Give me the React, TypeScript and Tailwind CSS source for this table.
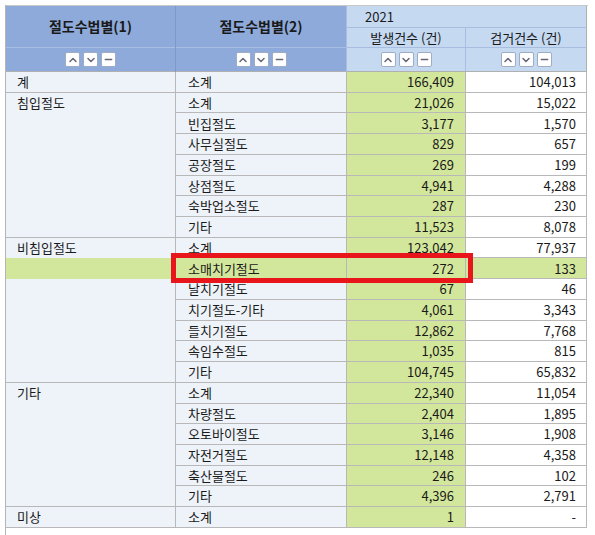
import { ChevronDown, ChevronUp, Minus } from "lucide-react";

type Row = { group: string; first: boolean; last: boolean; name: string; occ: string; arr: string; hl?: boolean };

const groups: { group: string; items: [string, string, string][] }[] = [
    { group: "계", items: [["소계", "166,409", "104,013"]] },
    {
        group: "침입절도",
        items: [
            ["소계", "21,026", "15,022"],
            ["빈집절도", "3,177", "1,570"],
            ["사무실절도", "829", "657"],
            ["공장절도", "269", "199"],
            ["상점절도", "4,941", "4,288"],
            ["숙박업소절도", "287", "230"],
            ["기타", "11,523", "8,078"],
        ],
    },
    {
        group: "비침입절도",
        items: [
            ["소계", "123,042", "77,937"],
            ["소매치기절도", "272", "133"],
            ["날치기절도", "67", "46"],
            ["치기절도-기타", "4,061", "3,343"],
            ["들치기절도", "12,862", "7,768"],
            ["속임수절도", "1,035", "815"],
            ["기타", "104,745", "65,832"],
        ],
    },
    {
        group: "기타",
        items: [
            ["소계", "22,340", "11,054"],
            ["차량절도", "2,404", "1,895"],
            ["오토바이절도", "3,146", "1,908"],
            ["자전거절도", "12,148", "4,358"],
            ["축산물절도", "246", "102"],
            ["기타", "4,396", "2,791"],
        ],
    },
    { group: "미상", items: [["소계", "1", "-"]] },
];

const rows: Row[] = groups.flatMap((g) =>
    g.items.map(([name, occ, arr], i) => ({
        group: g.group,
        first: i === 0,
        last: i === g.items.length - 1,
        name,
        occ,
        arr,
        hl: name === "소매치기절도",
    }))
);

function SortButtons() {
    const btn = "w-[15px] h-[15px] bg-white border border-[#9fadc4] rounded-[2px] flex items-center justify-center text-[#667]";
    return (
        <div className="flex items-center justify-center gap-[3px]">
            <span className={btn}>
                <ChevronUp size={12} strokeWidth={3} />
            </span>
            <span className={btn}>
                <ChevronDown size={12} strokeWidth={3} />
            </span>
            <span className={btn}>
                <Minus size={11} strokeWidth={3} />
            </span>
        </div>
    );
}

export default function App() {
    return (
        <div
            className="relative bg-white w-[595px] h-[535px] pl-[5px] pt-[5px] text-[13px] text-[#1a1a1a]"
            style={{ fontFamily: '"Noto Sans CJK KR", "Noto Sans", sans-serif' }}
        >
            <div className="border-l border-[#b5b5b5] h-[530px]">
                <div className="w-[582px] border-t border-[#c8c8c8]">
                    {/* header */}
                    <div className="flex">
                        <div className="w-[170px] flex flex-col border-r border-[#7f98c7]">
                            <div className="h-[42px] bg-[#8eaadb] flex items-center justify-center font-bold text-[14px] border-b border-[#a8bde2]">
                                절도수법별(1)
                            </div>
                            <div className="h-[24px] bg-[#8eaadb] flex items-center justify-center border-b border-[#b0b0b0]">
                                <SortButtons />
                            </div>
                        </div>
                        <div className="w-[171px] flex flex-col border-r border-[#a9bde0]">
                            <div className="h-[42px] bg-[#8eaadb] flex items-center justify-center font-bold text-[14px] border-b border-[#a8bde2]">
                                절도수법별(2)
                            </div>
                            <div className="h-[24px] bg-[#8eaadb] flex items-center justify-center border-b border-[#b0b0b0]">
                                <SortButtons />
                            </div>
                        </div>
                        <div className="w-[240px] flex flex-col border-r border-[#b0b0b0]">
                            <div className="h-[22px] bg-[#c5d9f1] flex items-center pl-[18px] border-b border-[#a9bde0]">2021</div>
                            <div className="flex h-[20px] border-b border-[#a9bde0]">
                                <div className="w-[119px] bg-[#c5d9f1] flex items-center justify-center border-r border-[#a9bde0]">
                                    발생건수 (건)
                                </div>
                                <div className="flex-1 bg-[#c5d9f1] flex items-center justify-center">검거건수 (건)</div>
                            </div>
                            <div className="flex h-[24px] border-b border-[#b0b0b0]">
                                <div className="w-[119px] bg-[#c5d9f1] flex items-center justify-center border-r border-[#a9bde0]">
                                    <SortButtons />
                                </div>
                                <div className="flex-1 bg-[#c5d9f1] flex items-center justify-center">
                                    <SortButtons />
                                </div>
                            </div>
                        </div>
                    </div>

                    {/* body */}
                    {rows.map((r, i) => (
                        <div key={i} className="flex h-[20.72px]">
                            <div
                                className={`w-[170px] flex items-center pl-[11px] border-r border-[#b8b8b8] ${
                                    r.last ? "border-b" : ""
                                } border-b-[#b8b8b8] ${r.hl ? "bg-[#d3e79c]" : "bg-[#eef3f9]"}`}
                            >
                                {r.first ? r.group : ""}
                            </div>
                            <div
                                className={`w-[171px] flex items-center pl-[12px] border-r border-b border-[#b8b8b8] ${
                                    r.hl ? "bg-[#d3e79c]" : "bg-[#eef3f9]"
                                }`}
                            >
                                {r.name}
                            </div>
                            <div className="w-[119px] flex items-center justify-end pr-[11px] bg-[#d3e79c] border-r border-b border-[#b8b8b8]">
                                {r.occ}
                            </div>
                            <div
                                className={`w-[121px] flex items-center justify-end pr-[10px] border-r border-b border-[#b8b8b8] ${
                                    r.hl ? "bg-[#d3e79c]" : "bg-white"
                                }`}
                            >
                                {r.arr}
                            </div>
                        </div>
                    ))}
                </div>
            </div>

            {/* highlight box */}
            <div className="absolute left-[171px] top-[253px] w-[302px] h-[30px] border-[5px] border-[#e8161b] pointer-events-none" />
        </div>
    );
}
